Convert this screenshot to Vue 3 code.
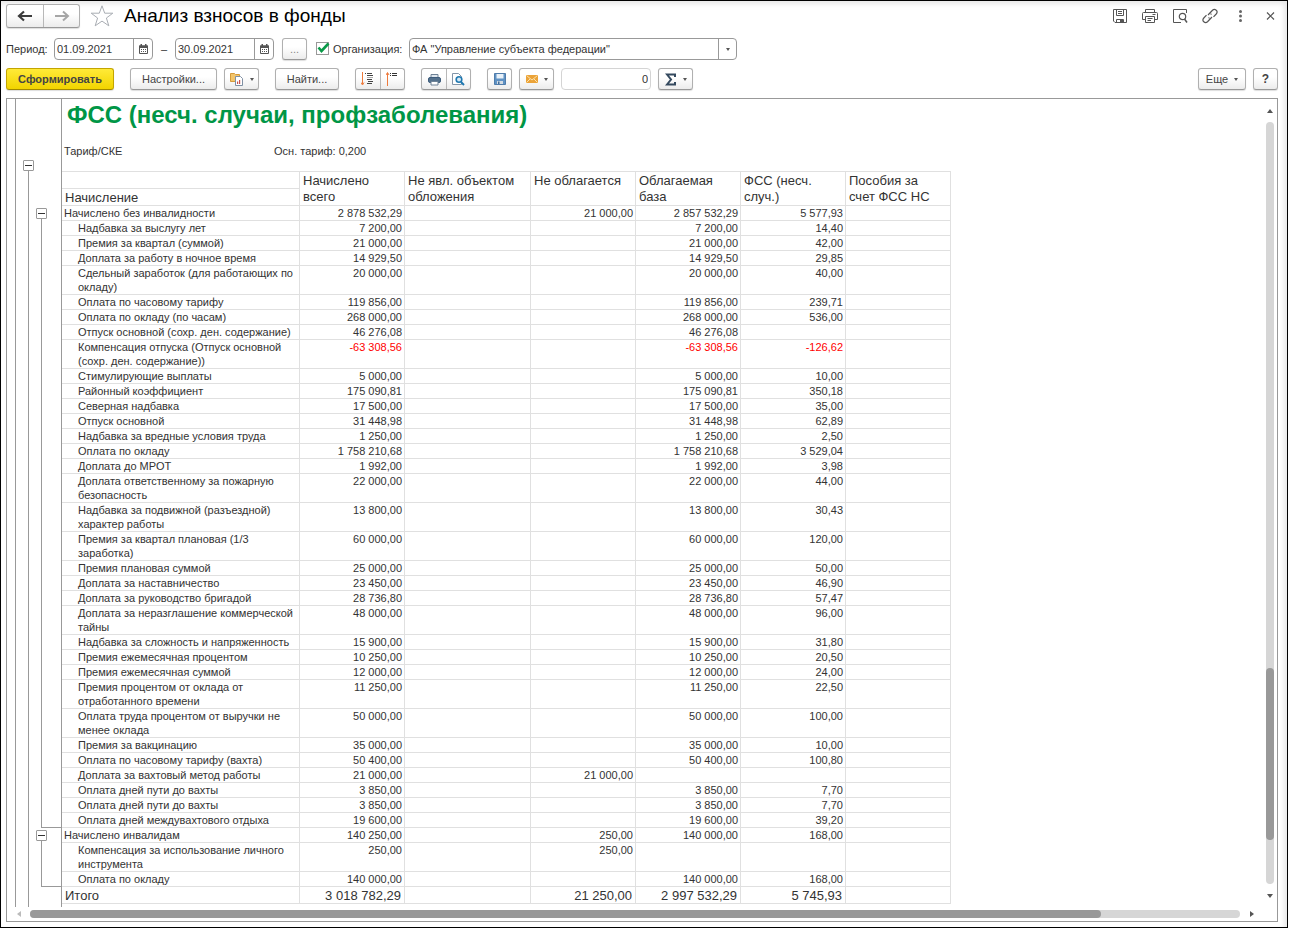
<script setup>
import { ref } from 'vue'

const title = 'Анализ взносов в фонды'
const dateFrom = ref('01.09.2021')
const dateTo = ref('30.09.2021')
const useOrg = ref(true)
const organization = ref('ФА "Управление субъекта федерации"')
const sum = ref('0')

const columns = [
  'Начислено\nвсего',
  'Не явл. объектом\nобложения',
  'Не облагается',
  'Облагаемая\nбаза',
  'ФСС (несч.\nслуч.)',
  'Пособия за\nсчет ФСС НС',
]

// Row: name, accrued, not taxable, taxable base, contribution
const same = (name, value, fss) => [name, value, '', value, fss]

const groups = [
  {
    rows: [
      ['Начислено без инвалидности', '2 878 532,29', '21 000,00', '2 857 532,29', '5 577,93'],
      same('Надбавка за выслугу лет', '7 200,00', '14,40'),
      same('Премия за квартал (суммой)', '21 000,00', '42,00'),
      same('Доплата за работу в ночное время', '14 929,50', '29,85'),
      same('Сдельный заработок (для работающих по\nокладу)', '20 000,00', '40,00'),
      same('Оплата по часовому тарифу', '119 856,00', '239,71'),
      same('Оплата по окладу (по часам)', '268 000,00', '536,00'),
      same('Отпуск основной (сохр. ден. содержание)', '46 276,08', ''),
      same('Компенсация отпуска (Отпуск основной\n(сохр. ден. содержание))', '-63 308,56', '-126,62'),
      same('Стимулирующие выплаты', '5 000,00', '10,00'),
      same('Районный коэффициент', '175 090,81', '350,18'),
      same('Северная надбавка', '17 500,00', '35,00'),
      same('Отпуск основной', '31 448,98', '62,89'),
      same('Надбавка за вредные условия труда', '1 250,00', '2,50'),
      same('Оплата по окладу', '1 758 210,68', '3 529,04'),
      same('Доплата до МРОТ', '1 992,00', '3,98'),
      same('Доплата ответственному за пожарную\nбезопасность', '22 000,00', '44,00'),
      same('Надбавка за подвижной (разъездной)\nхарактер работы', '13 800,00', '30,43'),
      same('Премия за квартал плановая (1/3\nзаработка)', '60 000,00', '120,00'),
      same('Премия плановая суммой', '25 000,00', '50,00'),
      same('Доплата за наставничество', '23 450,00', '46,90'),
      same('Доплата за руководство бригадой', '28 736,80', '57,47'),
      same('Доплата за неразглашение коммерческой\nтайны', '48 000,00', '96,00'),
      same('Надбавка за сложность и напряженность', '15 900,00', '31,80'),
      same('Премия ежемесячная процентом', '10 250,00', '20,50'),
      same('Премия ежемесячная суммой', '12 000,00', '24,00'),
      same('Премия процентом от оклада от\nотработанного времени', '11 250,00', '22,50'),
      same('Оплата труда процентом от выручки не\nменее оклада', '50 000,00', '100,00'),
      same('Премия за вакцинацию', '35 000,00', '10,00'),
      same('Оплата по часовому тарифу (вахта)', '50 400,00', '100,80'),
      ['Доплата за вахтовый метод работы', '21 000,00', '21 000,00', '', ''],
      same('Оплата дней пути до вахты', '3 850,00', '7,70'),
      same('Оплата дней пути до вахты', '3 850,00', '7,70'),
      same('Оплата дней междувахтового отдыха', '19 600,00', '39,20'),
    ],
  },
  {
    rows: [
      ['Начислено инвалидам', '140 250,00', '250,00', '140 000,00', '168,00'],
      ['Компенсация за использование личного\nинструмента', '250,00', '250,00', '', ''],
      same('Оплата по окладу', '140 000,00', '168,00'),
    ],
  },
]

const cells = (row) => [row[1], '', row[2], row[3], row[4], '']
const total = ['3 018 782,29', '', '21 250,00', '2 997 532,29', '5 745,93', '']

// A row takes 14px per text line plus its bottom rule
const groupHeight = (group) =>
  group.rows.reduce((acc, row) => acc + row[0].split('\n').length * 14 + 1, 0) - 2
</script>

<template>
  <main class="window">
    <header class="titlebar">
      <div class="pair nav">
        <button type="button" aria-label="Назад">
          <svg width="16" height="12" viewBox="0 0 16 12"><path d="M2 6H15M7 1.5L2 6L7 10.5" fill="none" stroke="#3c3c3c" stroke-width="2.2" /></svg>
        </button>
        <button type="button" aria-label="Вперед">
          <svg width="16" height="12" viewBox="0 0 16 12"><path d="M1 6H14M9 1.5L14 6L9 10.5" fill="none" stroke="#a6a6a6" stroke-width="2" /></svg>
        </button>
      </div>
      <button type="button" class="plain star" aria-label="В избранное">
        <svg width="24" height="24" viewBox="0 0 24 24"><path d="M12 1.8L14.7 9.2H22.8L16.4 14L18.8 21.8L12 17.1L5.2 21.8L7.6 14L1.2 9.2H9.3Z" fill="#fff" stroke="#a9adb3" /></svg>
      </button>
      <h1>{{ title }}</h1>
      <nav class="actions">
        <button type="button" class="plain" aria-label="Сохранить">
          <svg width="16" height="16" viewBox="0 0 16 16" fill="none" stroke="#555"><path d="M1.5 1.5H14.5V14.5H3L1.5 13ZM4.5 1.5V7.5H11.5V1.5M6 3.5H10M6 5.5H10M4.5 14.5V11.5H11.5V14.5" /><path d="M8 12H11V14H8Z" fill="#555" stroke="none" /></svg>
        </button>
        <button type="button" class="plain" aria-label="Печать">
          <svg width="16" height="16" viewBox="0 0 16 16" fill="none" stroke="#555"><path d="M3.5 5V1.5H12.5V5M3.5 11.5H0.5V5.5Q0.5 4.5 1.5 4.5H14.5Q15.5 4.5 15.5 5.5V11.5H12.5M3.5 8.5H12.5V14.5H3.5ZM5.5 10.5H10.5M5.5 12.5H9M10.5 6.5H13.5" /></svg>
        </button>
        <button type="button" class="plain" aria-label="Просмотр">
          <svg width="16" height="16" viewBox="0 0 16 16" fill="none" stroke="#555"><path d="M9 14.5H1.5V1.5H14.5V5" /><circle cx="10.5" cy="8.5" r="3.2" stroke-width="1.2" /><path d="M12.500 11L15 14.500" stroke-width="1.500" /></svg>
        </button>
        <button type="button" class="plain" aria-label="Ссылка">
          <svg width="16" height="16" viewBox="0 0 16 16" fill="none" stroke="#555" stroke-width="1.200"><path d="M6 7L10.500 2.300Q12.300 0.600 14.200 2.200Q16 4 14.200 6L11.500 8.800M10 9L5.500 13.700Q3.700 15.400 1.800 13.800Q0 12 1.800 10L4.500 7.200M6.500 9.500Q6.900 10 7.500 9.700M8.500 6.300Q9.200 6 9.500 6.500" /></svg>
        </button>
        <button type="button" class="plain" aria-label="Еще">
          <svg width="16" height="16" viewBox="0 0 16 16" fill="#666"><circle cx="8.500" cy="3.500" r="1.500" /><circle cx="8.500" cy="8" r="1.500" /><circle cx="8.500" cy="12.500" r="1.500" /></svg>
        </button>
        <button type="button" class="plain" aria-label="Закрыть">
          <svg width="16" height="16" viewBox="0 0 16 16"><path d="M5 4.500L12 11.500M12 4.500L5 11.500" stroke="#555" stroke-width="1.200" /></svg>
        </button>
      </nav>
    </header>

    <section class="filters">
      <label class="period" for="from">Период:</label>
      <div class="field date">
        <input id="from" v-model="dateFrom" type="text" />
        <button type="button" aria-label="Выбрать начало">
          <svg width="9" height="10" viewBox="0 0 9 10"><path d="M0.500 2H8.500V9.500H0.500Z" fill="#fff" stroke="#555" /><path d="M0 1.500H9V4H0ZM1.500 0H3V2H1.500ZM6 0H7.500V2H6Z" fill="#555" /><path d="M2 5.500H7.500M2 7.500H7.500" stroke="#555" stroke-dasharray="1 1" /></svg>
        </button>
      </div>
      <span class="dash">–</span>
      <div class="field date">
        <input v-model="dateTo" type="text" aria-label="Конец периода" />
        <button type="button" aria-label="Выбрать конец">
          <svg width="9" height="10" viewBox="0 0 9 10"><path d="M0.500 2H8.500V9.500H0.500Z" fill="#fff" stroke="#555" /><path d="M0 1.500H9V4H0ZM1.500 0H3V2H1.500ZM6 0H7.500V2H6Z" fill="#555" /><path d="M2 5.500H7.500M2 7.500H7.500" stroke="#555" stroke-dasharray="1 1" /></svg>
        </button>
      </div>
      <button type="button" class="btn square dots">...</button>
      <label class="check">
        <span class="tick">
          <input v-model="useOrg" type="checkbox" />
          <svg v-if="useOrg" width="15" height="15" viewBox="0 0 15 15"><path d="M2.500 5.500L5.500 9L12.500 1.500" fill="none" stroke="#0a9a48" stroke-width="2.600" /></svg>
        </span>
        <span>Организация:</span>
      </label>
      <div class="field combo">
        <select v-model="organization" aria-label="Организация">
          <option>ФА "Управление субъекта федерации"</option>
        </select>
        <span class="drop"><i class="caret"></i></span>
      </div>
    </section>

    <section class="toolbar">
      <button type="button" class="btn primary">Сформировать</button>
      <button type="button" class="btn settings">Настройки...</button>
      <button type="button" class="btn menu near" aria-label="Варианты отчета">
        <svg width="14" height="14" viewBox="0 0 14 14"><path d="M0.500 1.500H4.500L5.500 2.500H9.500V9.500H0.500Z" fill="#f3c56a" stroke="#d59a3a" /><path d="M5.500 4.500H10.500L12.500 6.500V13.500H5.500Z" fill="#fff" stroke="#7f8fa3" /><path d="M7 12V9.500h1.200V12zM9 12V8h1.200V12z" fill="#c9534f" /></svg>
        <i class="caret"></i>
      </button>
      <button type="button" class="btn find">Найти...</button>
      <div class="pair">
        <button type="button" aria-label="Развернуть группы">
          <svg width="14" height="14" viewBox="0 0 14 14"><path d="M1.500 0V12M0 10.500L1.500 13L3 10.500" fill="none" stroke="#ee7a3c" /><path d="M4 1.500H5M6 1.500H11M6 3.500H12M6 7.500H11M7 9.500H12M6 11.500H11" stroke="#444" /><path d="M6 5.500H12" stroke="#aaa" /></svg>
        </button>
        <button type="button" aria-label="Свернуть группы">
          <svg width="14" height="14" viewBox="0 0 14 14"><path d="M1.500 1V14M0 3L1.500 0.500L3 3" fill="none" stroke="#ee7a3c" /><path d="M4 1.500H5M6 1.500H11M4 3.500H5M6 3.500H11" stroke="#333" /></svg>
        </button>
      </div>
      <div class="pair">
        <button type="button" aria-label="Печать отчета">
          <svg width="13" height="13" viewBox="0 0 13 13"><path d="M3 1.500H10V5H3Z" fill="#dfe7ee" stroke="#6e8296" /><rect x="0.500" y="4.500" width="12" height="5" rx="1.500" fill="#54718c" stroke="#3d5c7c" /><path d="M3 8.500H10V12H3Z" fill="#fff" stroke="#6e8296" /></svg>
        </button>
        <button type="button" aria-label="Предварительный просмотр">
          <svg width="13" height="14" viewBox="0 0 13 14"><path d="M0.500 1.500H6.500L9.500 4.500V12.500H0.500Z" fill="#fff" stroke="#8295a8" /><circle cx="7" cy="7.500" r="2.800" fill="#d6e9f6" stroke="#1f78b0" stroke-width="1.600" /><path d="M9 10L12 13" stroke="#1f78b0" stroke-width="2" /></svg>
        </button>
      </div>
      <button type="button" class="btn square" aria-label="Сохранить отчет">
        <svg width="12" height="12" viewBox="0 0 12 12"><path d="M0.500 0.500H11.500V11.500H0.500Z" fill="#5f92c4" stroke="#4f7cab" /><path d="M2.500 1H9.500V5.500H2.500Z" fill="#e8f1f9" /><path d="M3 8H9V11H3Z" fill="#d3dbe3" /><path d="M4 8.500H5.500V11H4Z" fill="#3f6b99" /></svg>
      </button>
      <button type="button" class="btn menu near" aria-label="Отправить">
        <svg width="12" height="8" viewBox="0 0 12 8"><path d="M0 0H12V8H0Z" fill="#eba338" /><path d="M0.500 0.500L6 5L11.500 0.500M0.500 7.500L4 4M11.500 7.500L8 4" fill="none" stroke="#fbe2ae" /></svg>
        <i class="caret"></i>
      </button>
      <input v-model="sum" class="sum near" type="text" aria-label="Сумма" />
      <button type="button" class="btn menu near" aria-label="Сумма выделенных">
        <svg width="12" height="13" viewBox="0 0 12 13"><path d="M10 4V1.500H2L6 6.500L2 11.500H10V9" fill="none" stroke="#34495e" stroke-width="2" /></svg>
        <i class="caret"></i>
      </button>
      <div class="right">
        <button type="button" class="btn more">Еще <i class="caret"></i></button>
        <button type="button" class="btn square help">?</button>
      </div>
    </section>

    <section class="panel">
      <div class="sheet">
        <div class="strip"></div>
        <div class="level outer">
          <button type="button" class="toggle" aria-label="Свернуть отчет"></button>
          <div class="line"></div>
        </div>
        <div class="level inner">
          <div v-for="(group, i) in groups" :key="i" class="bracket" :style="{ height: groupHeight(group) + 'px' }">
            <button type="button" class="toggle" aria-label="Свернуть группу"></button>
            <div class="line"></div>
          </div>
        </div>
        <article class="report">
          <h2>ФСС (несч. случаи, профзаболевания)</h2>
          <p class="tariff"><span>Тариф/СКЕ</span><span>Осн. тариф: 0,200</span></p>
          <table>
            <colgroup>
              <col class="c-name" /><col class="c-num" /><col class="c-wide" /><col class="c-num" /><col class="c-num" /><col class="c-num" /><col class="c-num" />
            </colgroup>
            <thead>
              <tr>
                <th class="blank"></th>
                <th v-for="c in columns" :key="c" rowspan="2" scope="col">{{ c }}</th>
              </tr>
              <tr><th class="first" scope="col">Начисление</th></tr>
            </thead>
            <tbody v-for="(group, i) in groups" :key="i">
              <tr v-for="(row, r) in group.rows" :key="r">
                <td :class="['name', { child: r > 0 }]">{{ row[0] }}</td>
                <td v-for="(v, k) in cells(row)" :key="k" :class="{ negative: v.startsWith('-') }">{{ v }}</td>
              </tr>
            </tbody>
            <tfoot>
              <tr>
                <td class="name">Итого</td>
                <td v-for="(v, k) in total" :key="k">{{ v }}</td>
              </tr>
            </tfoot>
          </table>
        </article>
      </div>
      <div class="scroll vertical">
        <span class="arrow"><i class="up"></i></span>
        <div class="track"><div class="thumb"></div></div>
        <span class="arrow"><i class="down"></i></span>
      </div>
      <div class="scroll horizontal">
        <span class="arrow"><i class="left"></i></span>
        <div class="track"><div class="thumb"></div></div>
        <span class="arrow"><i class="rightward"></i></span>
      </div>
    </section>
  </main>
</template>

<style>
body {
  background: #fff;
}
</style>

<style scoped>
* {
  box-sizing: border-box;
}
.window {
  display: flex;
  flex-direction: column;
  width: calc(100% - 1px);
  min-height: calc(100vh - 1px);
  padding: 3px 9px 5px 5px;
  border: 1px solid #000;
  box-shadow: inset -3px 3px 5px #e8e8e8;
  font-family: "Liberation Sans", Arial, sans-serif;
  font-size: 11px;
  color: #333;
}
button,
input,
select {
  margin: 0;
  font: inherit;
  color: inherit;
}
button {
  display: flex;
  align-items: center;
  justify-content: center;
  padding: 0;
}
svg {
  display: block;
  flex: none;
}
.titlebar {
  display: flex;
  align-items: center;
  height: 24px;
}
h1 {
  margin: 0 0 0 10px;
  font-size: 19px;
  font-weight: 400;
  line-height: 24px;
  color: #000;
}
.plain {
  border: 0;
  background: none;
}
.star {
  margin-left: 10px;
}
.actions {
  display: flex;
  gap: 14px;
  margin-left: auto;
}
.pair {
  display: flex;
  height: 22px;
  border: 1px solid #b0b0b0;
  border-bottom-color: #989898;
  border-radius: 3px;
  background: linear-gradient(#fff 40%, #ececec);
  box-shadow: 0 1px 1px #ddd;
}
.pair button {
  width: 24px;
  border: 0;
  background: none;
}
.pair button + button {
  border-left: 1px solid #b8b8b8;
}
.nav {
  height: 24px;
}
.nav button,
.nav button + button {
  width: 36px;
}
.filters {
  display: flex;
  align-items: center;
  height: 22px;
  margin-top: 10px;
}
.period {
  width: 48px;
}
.field {
  display: flex;
  height: 22px;
  border: 1px solid #999;
  border-radius: 4px;
  background: #fff;
  overflow: hidden;
}
.date {
  width: 99px;
}
.date input {
  flex: 1;
  min-width: 0;
  padding: 0 2px;
  border: 0;
  background: none;
}
.date button {
  width: 19px;
  border: 0;
  border-left: 1px solid #999;
  background: none;
}
.dash {
  width: 22px;
  text-align: center;
}
.btn {
  height: 22px;
  border: 1px solid #b0b0b0;
  border-bottom-color: #989898;
  border-radius: 3px;
  background: linear-gradient(#fff 40%, #ececec);
  box-shadow: 0 1px 1px #ddd;
  color: #444;
}
.square {
  width: 25px;
}
.dots {
  margin-left: 8px;
  color: #888;
}
.check {
  display: flex;
  align-items: center;
  width: 93px;
  margin-left: 9px;
  gap: 2px;
}
.tick {
  display: grid;
  width: 15px;
  height: 15px;
}
.tick > * {
  grid-area: 1 / 1;
}
.tick input {
  width: 13px;
  height: 13px;
  border: 1px solid #999;
  background: #fff;
  appearance: none;
}
.tick svg {
  pointer-events: none;
}
.combo {
  display: grid;
  grid-template-columns: 1fr 18px;
  width: 328px;
}
.combo select {
  grid-area: 1 / 1 / 2 / 3;
  padding: 0 20px 0 2px;
  border: 0;
  background: none;
  appearance: none;
}
.drop {
  grid-area: 1 / 2;
  display: flex;
  align-items: center;
  justify-content: center;
  border-left: 1px solid #999;
  pointer-events: none;
}
.caret {
  border: 2px solid transparent;
  border-top: 3px solid #555;
  border-bottom: 0;
}
.toolbar {
  display: flex;
  gap: 16px;
  height: 22px;
  margin-top: 8px;
}
.near {
  margin-left: -9px;
}
.primary {
  width: 108px;
  border-color: #c3a500;
  border-bottom-color: #a38a00;
  background: linear-gradient(#ffea38, #f2d400);
  font-weight: 700;
}
.settings {
  width: 87px;
}
.find {
  width: 64px;
}
.menu {
  width: 35px;
  gap: 6px;
}
.sum {
  width: 90px;
  height: 22px;
  padding: 0 2px;
  border: 1px solid #d4d4d4;
  border-radius: 4px;
  background: #fff;
  text-align: right;
}
.right {
  display: flex;
  gap: 7px;
  margin-left: auto;
}
.more {
  width: 48px;
  gap: 6px;
}
.help {
  font-size: 12px;
  font-weight: 700;
}
.panel {
  display: grid;
  flex: 1;
  grid-template-columns: 1fr 14px;
  grid-template-rows: 1fr 14px;
  margin-top: 8px;
  border: 1px solid #999;
  background: #fff;
}
.sheet {
  display: flex;
  min-width: 0;
}
.strip {
  width: 9px;
  border-right: 1px solid #999;
}
.level {
  display: flex;
  flex-direction: column;
}
.outer {
  width: 18px;
  padding: 61px 0 0 7px;
}
.inner {
  width: 28px;
  padding: 107px 0 0 2px;
  border-right: 1px solid #999;
}
.bracket {
  display: flex;
  flex-direction: column;
  margin-top: 2px;
}
.bracket .line {
  border-bottom: 1px solid #999;
}
.line {
  flex: 1;
  margin-left: 5px;
  border-left: 1px solid #999;
}
.toggle {
  width: 11px;
  height: 11px;
  border: 1px solid #999;
  border-radius: 1px;
  background: #fff;
}
.toggle::before {
  width: 7px;
  height: 1px;
  background: #333;
  content: "";
}
.report {
  flex: 1;
  padding-bottom: 3px;
}
h2 {
  margin: 0 0 0 5px;
  font-size: 24px;
  font-weight: 700;
  line-height: 32px;
  color: #009646;
}
.tariff {
  display: grid;
  grid-template-columns: 210px auto;
  margin: 13px 0;
  padding-left: 2px;
  line-height: 14px;
}
table {
  width: 889px;
  border-top: 1px solid #e0e0e0;
  border-spacing: 0;
  table-layout: fixed;
}
.c-name {
  width: 238px;
}
.c-num {
  width: 105px;
}
.c-wide {
  width: 126px;
}
th,
td {
  border-right: 1px solid #e0e0e0;
  border-bottom: 1px solid #e0e0e0;
  vertical-align: top;
  white-space: pre;
}
th {
  padding: 1px 0 0 3px;
  font-size: 13px;
  font-weight: 400;
  line-height: 16px;
  text-align: left;
}
.blank {
  height: 17px;
}
.first {
  padding-top: 2px;
  line-height: 14px;
}
td {
  padding: 0 2px;
  line-height: 14px;
  text-align: right;
}
.name {
  text-align: left;
}
.child {
  padding-left: 16px;
}
.negative {
  color: #f00;
}
tfoot td {
  padding: 2px 3px 0;
  font-size: 13px;
  line-height: 14px;
}
.scroll {
  display: flex;
  align-items: center;
}
.vertical {
  flex-direction: column;
}
.arrow {
  display: flex;
  flex: none;
  align-items: center;
  justify-content: center;
  width: 23px;
}
.vertical .arrow {
  width: 14px;
  height: 23px;
}
.arrow i {
  border: 3px solid transparent;
}
.arrow .up {
  border-top: 0;
  border-bottom: 4px solid #555;
}
.arrow .down {
  border-bottom: 0;
  border-top: 4px solid #555;
}
.arrow .left {
  border-left: 0;
  border-right: 4px solid #bbb;
}
.arrow .rightward {
  border-right: 0;
  border-left: 4px solid #555;
}
.track {
  flex: 1;
  border-radius: 4px;
  background: #d6d6d6;
}
.thumb {
  border-radius: 4px;
  background: #999;
}
.vertical .track {
  display: flex;
  flex-direction: column;
  justify-content: flex-end;
  width: 8px;
  padding-bottom: 44px;
}
.vertical .thumb {
  height: 24%;
}
.horizontal .track {
  height: 8px;
}
.horizontal .thumb {
  width: 88.5%;
  height: 8px;
}
</style>
